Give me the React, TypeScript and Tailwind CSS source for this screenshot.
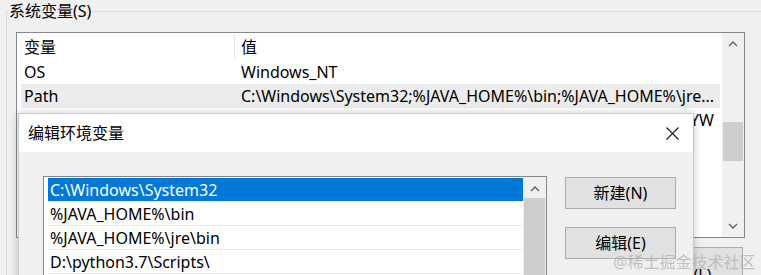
import React from 'react'

const font = "font-['Noto_Sans','Noto_Sans_CJK_SC',sans-serif]"

function ChevronUp() {
  return (
    <svg width="10" height="6" viewBox="0 0 10 6" fill="none">
      <polyline points="1,5 5,1 9,5" stroke="#606060" strokeWidth="1.4" />
    </svg>
  )
}

function ChevronDown() {
  return (
    <svg width="10" height="6" viewBox="0 0 10 6" fill="none">
      <polyline points="1,1 5,5 9,1" stroke="#606060" strokeWidth="1.4" />
    </svg>
  )
}

function CloseIcon() {
  return (
    <svg width="13" height="13" viewBox="0 0 13 13" fill="none">
      <path d="M0.5 0.5 L12.5 12.5 M12.5 0.5 L0.5 12.5" stroke="#1a1a1a" strokeWidth="1.1" />
    </svg>
  )
}

// third row sits behind the dialog, only the tail of its value shows
const sysVars = [
  { name: 'OS', value: 'Windows_NT', hot: false, right: false },
  { name: 'Path', value: 'C:\\Windows\\System32;%JAVA_HOME%\\bin;%JAVA_HOME%\\jre...', hot: true, right: false },
  { name: '', value: '.VBE;.JS;.JSE;.WSF;.WSH;.MSC;.PY;.PYW', hot: false, right: true },
]

const pathItems = [
  'C:\\Windows\\System32',
  '%JAVA_HOME%\\bin',
  '%JAVA_HOME%\\jre\\bin',
  'D:\\python3.7\\Scripts\\',
]

export default function App() {
  return (
    <div className={`relative w-[761px] h-[275px] overflow-hidden bg-[#f0f0f0] text-[16px] text-black ${font}`}>
      {/* 系统变量 group box */}
      <div className="pl-[6px] pt-[11px]">
        <div className="border-l border-t border-[#dcdcdc] h-[300px]">
          <div className="-mt-[12px] ml-[1px] w-fit bg-[#f0f0f0] px-[1px] leading-[22px]">系统变量(S)</div>

          {/* list view */}
          <div className="mt-[10px] ml-[9px] w-[729px] h-[206px] border border-[#828790] bg-white flex">
            <div className="w-[705px] flex flex-col">
              <div className="h-[27px] flex items-center">
                <div className="w-[218px] h-[25px] pl-[7px] flex items-center border-r border-[#e5e5e5]">变量</div>
                <div className="pl-[6px]">值</div>
              </div>
              {sysVars.map((v, i) => (
                <div
                  key={i}
                  className={`h-[24px] ml-[4px] mr-[2px] flex items-center whitespace-nowrap ${v.hot ? 'bg-[#ececec]' : ''}`}
                >
                  <div className="w-[213px] pl-[3px] shrink-0">{v.name}</div>
                  <div className={`flex-1 pl-[7px] pr-[6px] overflow-hidden flex ${v.right ? 'justify-end' : ''}`}>
                    <span>{v.value}</span>
                  </div>
                </div>
              ))}
            </div>
            {/* scrollbar */}
            <div className="w-[22px] bg-[#f0f0f0] flex flex-col">
              <div className="h-[22px] flex items-center justify-center"><ChevronUp /></div>
              <div className="flex-1">
                <div className="mt-[67px] mx-[1px] h-[39px] bg-[#cdcdcd]" />
              </div>
              <div className="h-[22px] flex items-center justify-center"><ChevronDown /></div>
            </div>
          </div>

          {/* button under list, mostly hidden by the dialog */}
          <div className="mt-[9px] ml-[9px] w-[727px] flex justify-end">
            <div className="w-[113px] h-[56px] border border-[#adadad] bg-[#e1e1e1] flex items-center justify-center">删除(L)</div>
          </div>
        </div>
      </div>

      {/* 编辑环境变量 dialog window */}
      <div className="absolute left-[18px] top-[113px] w-[676px] h-[200px] bg-[#f0f0f0] border border-[#c8c8c8] shadow-[0_0_8px_rgba(0,0,0,0.22)]">
        <div className="h-[38px] bg-white flex items-center justify-between">
          <span className="pl-[9px]">编辑环境变量</span>
          <div className="w-[42px] h-full flex items-center justify-center"><CloseIcon /></div>
        </div>

        <div className="pt-[24px] flex">
          {/* list box */}
          <div className="ml-[24px] w-[504px] h-[140px] border border-[#828790] bg-white flex">
            <div className="pl-[4px] pt-[1px] flex-1 flex flex-col">
              {pathItems.map((p, i) => (
                <div
                  key={p}
                  className={`h-[24px] pl-[2px] flex items-center whitespace-nowrap border-b ${i === 0 ? 'bg-[#0078d7] text-white border-white' : 'border-[#ebebeb]'}`}
                >
                  {p}
                </div>
              ))}
            </div>
            <div className="w-[23px] bg-[#f0f0f0] flex flex-col">
              <div className="h-[21px] pt-[3px] flex items-center justify-center"><ChevronUp /></div>
              <div className="mx-[1px] h-[120px] bg-[#cdcdcd]" />
            </div>
          </div>

          {/* side buttons */}
          <div className="ml-[18px] pt-[1px] flex flex-col gap-[18px]">
            <div className="w-[111px] h-[32px] border border-[#adadad] bg-[#e1e1e1] flex items-center justify-center">新建(N)</div>
            <div className="w-[111px] h-[32px] border border-[#adadad] bg-[#e1e1e1] flex items-center justify-center">编辑(E)</div>
          </div>
        </div>
      </div>

      {/* watermark */}
      <div className="absolute left-[613px] top-[251px] text-[16px] leading-[22px] text-[#b4b4b4]/80 whitespace-nowrap">
        @稀土掘金技术社区
      </div>
    </div>
  )
}
